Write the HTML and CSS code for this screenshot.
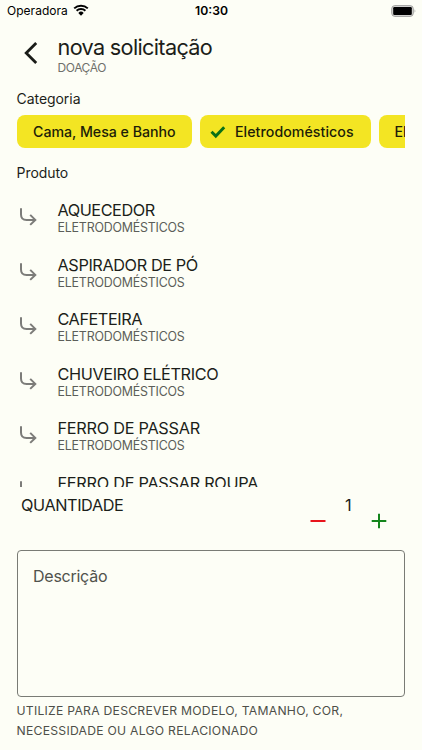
FILE: index.html
```html
<!DOCTYPE html>
<html lang="pt-BR">
<head>
<meta charset="utf-8">
<meta name="viewport" content="width=device-width, initial-scale=1">
<title>nova solicitação</title>
<link rel="stylesheet" href="styles.css">
</head>
<body>
<svg width="0" height="0" class="defs" aria-hidden="true">
  <symbol id="sub" viewBox="0 0 18 19"><path d="M2 1.2V7.4Q2 12.9 7.5 12.9H16.2M11.2 7.9L16.3 12.9L11.2 17.9" fill="none" stroke="#7c7c79" stroke-width="2"/></symbol>
</svg>
<div class="screen">
  <div class="status">
    <div class="carrier"><span>Operadora</span>
      <svg width="16" height="12" viewBox="0 0 16 12"><path d="M1.2 4.4A9.8 9.8 0 0 1 14.8 4.4M3.6 6.8A6.4 6.4 0 0 1 12.4 6.8" fill="none" stroke="#000" stroke-width="2"/><path d="M8 11.7L5.3 8.9A3.9 3.9 0 0 1 10.7 8.9Z"/></svg>
    </div>
    <time class="clock">10:30</time>
    <svg class="battery" width="26" height="12" viewBox="0 0 26 12"><rect x="1.7" y=".6" width="21.6" height="10.8" rx="3.2" fill="#d6d6d3" stroke="#a2a29f"/><rect x="3.2" y="2.1" width="18.6" height="7.8" rx="1.2"/><path d="M24.7 4.2Q26 6 24.7 7.8Z" fill="#888"/></svg>
  </div>
  <header class="header">
    <svg class="back" width="14" height="24" viewBox="0 0 14 24"><path d="M12.2 2L2.2 12L12.2 22" fill="none" stroke="#1a1c18" stroke-width="2.8"/></svg>
    <div class="titles"><h1>nova solicitação</h1><p>DOAÇÃO</p></div>
  </header>
  <h2 class="label">Categoria</h2>
  <div class="chips">
    <div class="chip first">Cama, Mesa e Banho</div>
    <div class="chip selected"><svg width="16" height="14" viewBox="0 0 16 14"><path d="M1.5 6.8L5.8 11.1L14.2 2.3" fill="none" stroke="#0b7016" stroke-width="2.9"/></svg><span>Eletrodomésticos</span></div>
    <div class="chip third">El</div>
  </div>
  <h2 class="label product">Produto</h2>
  <div class="list">
    <div class="item"><svg class="arrow"><use href="#sub"/></svg><div><h3 class="n1">AQUECEDOR</h3><p>ELETRODOMÉSTICOS</p></div></div>
    <div class="item"><svg class="arrow"><use href="#sub"/></svg><div><h3 class="n2">ASPIRADOR DE PÓ</h3><p>ELETRODOMÉSTICOS</p></div></div>
    <div class="item"><svg class="arrow"><use href="#sub"/></svg><div><h3 class="n1">CAFETEIRA</h3><p>ELETRODOMÉSTICOS</p></div></div>
    <div class="item"><svg class="arrow"><use href="#sub"/></svg><div><h3 class="n2">CHUVEIRO ELÉTRICO</h3><p>ELETRODOMÉSTICOS</p></div></div>
    <div class="item"><svg class="arrow"><use href="#sub"/></svg><div><h3 class="n3">FERRO DE PASSAR</h3><p>ELETRODOMÉSTICOS</p></div></div>
    <div class="item"><svg class="arrow"><use href="#sub"/></svg><div><h3 class="n3">FERRO DE PASSAR ROUPA</h3></div></div>
  </div>
  <div class="quantity">
    <span class="qlabel">QUANTIDADE</span>
    <svg class="minus" width="16" height="16" viewBox="0 0 16 16"><path d="M.5 8H15.5" stroke="#e8141c" stroke-width="2"/></svg>
    <span class="value">1</span>
    <svg class="plus" width="16" height="16" viewBox="0 0 16 16"><path d="M.7 8H15.3M8 .7V15.3" stroke="#14851c" stroke-width="2"/></svg>
  </div>
  <div class="field">Descrição</div>
  <p class="hint"><span>UTILIZE PARA DESCREVER MODELO, TAMANHO, COR,</span><br><span>NECESSIDADE OU ALGO RELACIONADO</span></p>
</div>
</body>
</html>
```
FILE: styles.css
```css
* { box-sizing: border-box; }
body { margin: 0; background: #fdfef6; color: #1c1e1a; font-family: Inter, sans-serif; }
h1, h2, h3, p { margin: 0; font-weight: 400; }
svg { display: block; flex: none; }
.defs { position: absolute; }
.screen { width: 422px; height: 750px; overflow: hidden; background: #fdfef6; }
.status { display: grid; grid-template-columns: 1fr auto 1fr; height: 22px; padding: 0 6px 0 7px; color: #000; align-items: center; }
.carrier { display: flex; align-items: center; gap: 5px; font-size: 12px; letter-spacing: .03px; line-height: 22px; }
.carrier svg { margin-top: -2px; }
.clock { font-size: 12.2px; font-weight: 600; letter-spacing: 0; line-height: 22px; }
.battery { justify-self: end; margin-top: -1px; }
.header { display: flex; height: 68px; padding: 12px 0 0 24px; }
.back { margin: 7px 19.5px 0 0; }
.titles h1 { font-size: 21.7px; line-height: 26px; letter-spacing: -.68px; }
.titles p { font-size: 12px; line-height: 16px; letter-spacing: -.4px; color: #6f706b; }
.label { margin-left: 16.5px; font-size: 14px; line-height: 18px; letter-spacing: -.05px; }
.chips { display: flex; gap: 8px; margin: 7px 17px 0; overflow: hidden; height: 33px; }
.chip { flex: none; display: flex; align-items: center; height: 33px; border-radius: 8px; background: #f3e523; color: #201d08; font-size: 14.2px; font-weight: 500; letter-spacing: -.02px; white-space: nowrap; padding-left: 16px; }
.first { width: 175px; }
.selected { width: 170.5px; padding-left: 10px; gap: 9px; letter-spacing: .05px; }
.third { width: 120px; }
.product { margin-top: 16px; }
.list { height: 291px; margin-top: 14px; padding-left: 19px; overflow: hidden; }
.item { display: flex; height: 54.6px; gap: 20.5px; padding-top: 5px; }
.arrow { width: 18px; height: 19px; margin-top: 6px; }
.item h3 { font-size: 16.3px; line-height: 19px; white-space: nowrap; }
.item .n1 { letter-spacing: -.46px; }
.item .n2 { letter-spacing: -.4px; }
.item .n3 { letter-spacing: -.28px; }
.item p { font-size: 12.4px; line-height: 15px; letter-spacing: -.19px; color: #5c5e59; }
.quantity { display: flex; height: 62px; padding-left: 21px; font-size: 16.3px; line-height: 20px; padding-top: 8px; }
.qlabel { width: 289px; letter-spacing: -.42px; }
.minus, .plus { margin-top: 18px; }
.value { width: 45px; padding-left: 19px; }
.field { height: 147px; margin: 1px 17px 0; border: 1px solid #797b75; border-radius: 4px; padding: 15px 15px; font-size: 16px; line-height: 20px; letter-spacing: -.25px; color: #50524c; }
.hint { margin: 4px 0 0 16.5px; font-size: 12.2px; line-height: 20px; letter-spacing: .25px; color: #4d4f49; white-space: nowrap; }
```
